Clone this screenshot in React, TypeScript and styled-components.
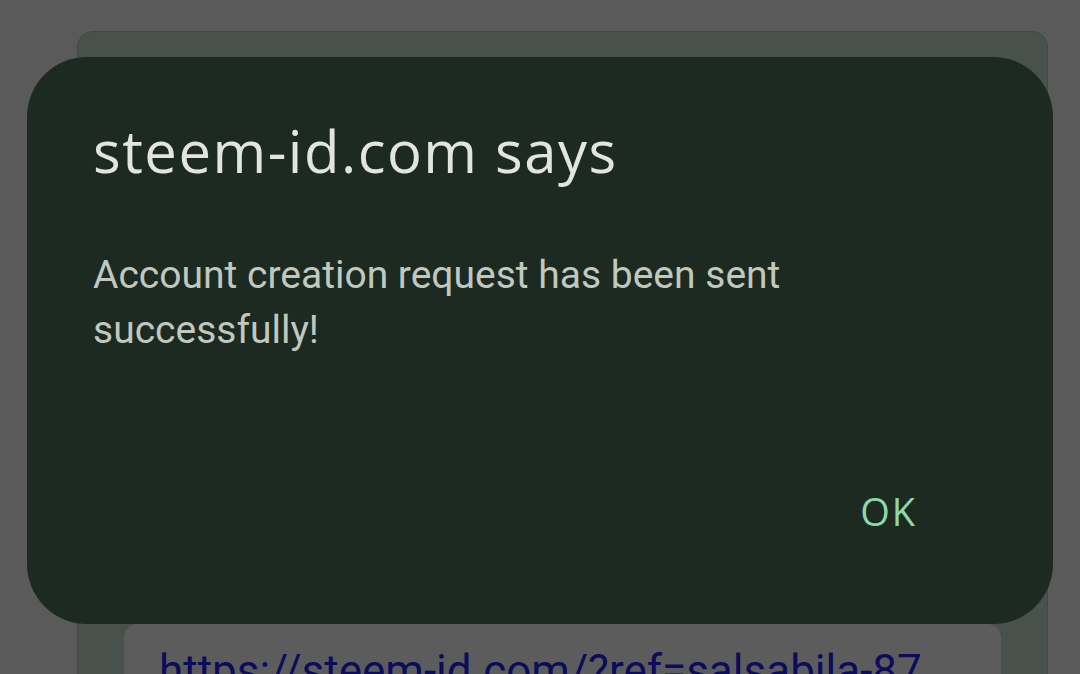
import React from "react";
import styled, { createGlobalStyle } from "styled-components";

const Global = createGlobalStyle`
  html, body { margin: 0; padding: 0; background: #5a5a5a; }
  #root { width: 1080px; height: 674px; }
`;

const Screen = styled.div`
  position: relative;
  width: 1080px;
  height: 674px;
  overflow: hidden;
  background: #5a5a5a;
  padding: 31px 32px 0 77px;
  box-sizing: border-box;
`;

const PageCard = styled.div`
  width: 971px;
  height: 700px;
  box-sizing: border-box;
  background: #48514c;
  border: 1.5px solid #404a44;
  border-radius: 16px;
  display: flex;
  flex-direction: column;
  align-items: center;
  padding-top: 592px;
`;

const LinkBox = styled.div`
  width: 877px;
  height: 120px;
  background: #5c5c5c;
  border-radius: 14px 14px 0 0;
  padding: 25px 0 0 35px;
  box-sizing: border-box;
`;

const LinkText = styled.a`
  font-family: Roboto, "Liberation Sans", sans-serif;
  font-size: 44px;
  line-height: 1;
  color: #0c0c5c;
  text-decoration: none;
  white-space: nowrap;
`;

const Dialog = styled.div`
  position: absolute;
  left: 27px;
  top: 57px;
  width: 1026px;
  height: 567px;
  background: #1c2a21;
  border-radius: 60px;
  box-sizing: border-box;
  padding: 65px 66px 0 66px;
  display: flex;
  flex-direction: column;
`;

const Title = styled.h1`
  margin: 0;
  font-family: "Open Sans", Roboto, sans-serif;
  font-weight: 400;
  font-size: 58px;
  line-height: 1;
  color: #e2e5df;
  letter-spacing: 1.5px;
`;

const Message = styled.p`
  margin: 68px 0 0 0;
  font-family: Roboto, "Liberation Sans", sans-serif;
  font-size: 39px;
  line-height: 55px;
  color: #c0c8bf;
  width: 740px;
`;

const Actions = styled.div`
  margin-top: auto;
  display: flex;
  justify-content: flex-end;
  padding: 0 70px 94px 0;
`;

const OkButton = styled.button`
  background: none;
  border: none;
  padding: 0;
  font-family: "Open Sans", Roboto, sans-serif;
  font-size: 38px;
  line-height: 1;
  letter-spacing: 2px;
  color: #8ed8a7;
  cursor: pointer;
`;

export default function App() {
  return (
    <>
      <Global />
      <Screen>
        <PageCard>
          <LinkBox>
            <LinkText href="#">https://steem-id.com/?ref=salsabila-87</LinkText>
          </LinkBox>
        </PageCard>
        <Dialog>
          <Title>steem-id.com says</Title>
          <Message>Account creation request has been sent successfully!</Message>
          <Actions>
            <OkButton>OK</OkButton>
          </Actions>
        </Dialog>
      </Screen>
    </>
  );
}
